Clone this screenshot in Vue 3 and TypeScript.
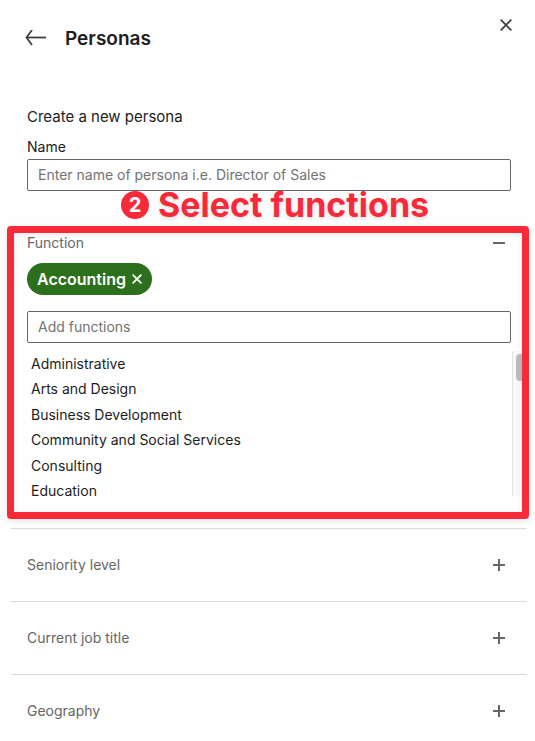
<script setup lang="ts">
import { computed, ref } from 'vue'

const name = ref('')
const query = ref('')
const functionOpen = ref(true)
const selected = ref<string[]>(['Accounting'])
const allFunctions: string[] = [
  'Accounting',
  'Administrative',
  'Arts and Design',
  'Business Development',
  'Community and Social Services',
  'Consulting',
  'Education',
]
const collapsed: string[] = ['Seniority level', 'Current job title', 'Geography']

const options = computed(() =>
  allFunctions.filter(
    (f) => !selected.value.includes(f) && f.toLowerCase().includes(query.value.toLowerCase()),
  ),
)

function add(item: string) {
  selected.value.push(item)
}
function remove(item: string) {
  selected.value = selected.value.filter((f) => f !== item)
}
</script>

<template>
  <main class="panel">
    <header class="header">
      <button class="icon-button back" type="button" aria-label="Back">
        <svg width="22" height="16" viewBox="0 0 22 16" fill="none" stroke="#404040" stroke-width="1.8">
          <path d="M21 7.5H1.5" />
          <path d="M7 0L1.5 7.5L7 15" />
        </svg>
      </button>
      <h1 class="title">Personas</h1>
      <button class="icon-button close" type="button" aria-label="Close">
        <svg width="12" height="12" viewBox="0 0 12 12" fill="none" stroke="#404040" stroke-width="1.8">
          <path d="M0.7 0.7L11.3 11.3M11.3 0.7L0.7 11.3" />
        </svg>
      </button>
    </header>

    <section class="create">
      <h2 class="subtitle">Create a new persona</h2>
      <label class="label" for="persona-name">Name</label>
      <input
        id="persona-name"
        v-model="name"
        class="field"
        type="text"
        placeholder="Enter name of persona i.e. Director of Sales"
      />
    </section>

    <section class="function">
      <div class="callout">
        <svg class="badge" width="28" height="28" viewBox="0 0 28 28" aria-hidden="true">
          <circle cx="14" cy="14" r="14" fill="#f82a3a" />
          <text x="14" y="21" text-anchor="middle" class="badge-text">2</text>
        </svg>
        <span>Select functions</span>
      </div>
      <div class="frame"></div>

      <button
        class="row-head"
        type="button"
        :aria-expanded="functionOpen"
        @click="functionOpen = !functionOpen"
      >
        <span>Function</span>
        <svg width="12" height="12" viewBox="0 0 12 12" stroke="#666" stroke-width="2">
          <path d="M0 6H12" />
          <path v-if="!functionOpen" d="M6 0V12" />
        </svg>
      </button>

      <div v-if="functionOpen" class="function-body">
        <div class="chips">
          <button v-for="item in selected" :key="item" class="chip" type="button" @click="remove(item)">
            <span>{{ item }}</span>
            <svg width="10" height="10" viewBox="0 0 10 10" fill="none" stroke="#fff" stroke-width="1.8">
              <path d="M0.6 0.6L9.4 9.4M9.4 0.6L0.6 9.4" />
            </svg>
          </button>
        </div>
        <input
          v-model="query"
          class="field"
          type="text"
          placeholder="Add functions"
          aria-label="Add functions"
        />
        <div class="list">
          <ul class="options">
            <li v-for="item in options" :key="item">
              <button class="option" type="button" @click="add(item)">{{ item }}</button>
            </li>
          </ul>
          <div class="track"><div class="thumb"></div></div>
        </div>
      </div>
    </section>

    <section v-for="label in collapsed" :key="label" class="collapsed">
      <button class="row-head tall" type="button" aria-expanded="false">
        <span>{{ label }}</span>
        <svg width="12" height="12" viewBox="0 0 12 12" stroke="#666" stroke-width="2">
          <path d="M0 6H12M6 0V12" />
        </svg>
      </button>
    </section>
  </main>
</template>

<style>
body {
  margin: 0;
  background: #fefefe;
}
</style>

<style scoped>
.panel,
.panel * {
  box-sizing: border-box;
}
.panel {
  padding: 0 8px 0 11px;
  font-family: Inter, 'Liberation Sans', sans-serif;
  font-size: 14px;
  line-height: 20px;
  color: #1d1d1d;
}
button {
  margin: 0;
  padding: 0;
  border: 0;
  background: none;
  color: inherit;
  font: inherit;
  text-align: left;
  cursor: pointer;
}
svg {
  display: block;
  flex: none;
}
.header {
  display: flex;
  align-items: center;
  height: 76px;
  padding: 0 15px 0 14px;
}
.title {
  flex: 1;
  margin: 0 0 0 18px;
  padding-top: 2px;
  font-size: 19px;
  line-height: 24px;
  font-weight: 600;
}
.close {
  align-self: flex-start;
  margin-top: 19px;
}
.create {
  padding: 29px 16px 0;
}
.subtitle {
  margin: 0 0 8px;
  font-size: 15px;
  line-height: 24px;
  font-weight: 400;
}
.label {
  display: block;
  margin-bottom: 2px;
}
.field {
  display: block;
  width: 100%;
  height: 32px;
  padding: 0 10px 2px;
  border: 1px solid #666;
  border-radius: 2px;
  background: transparent;
  color: inherit;
  font: inherit;
}
.field::placeholder {
  color: #737373;
  opacity: 1;
}
.function {
  position: relative;
  padding: 40px 16px 32px;
}
.row-head {
  display: flex;
  align-items: center;
  justify-content: space-between;
  width: 100%;
  height: 24px;
  padding-right: 6px;
  color: #666;
}
.function-body {
  padding-top: 8px;
}
.chips {
  display: flex;
  gap: 8px;
  margin-bottom: 16px;
}
.chip {
  display: flex;
  align-items: center;
  gap: 6px;
  height: 32px;
  padding: 0 10px;
  border-radius: 16px;
  background: #2c6f1c;
  color: #fff;
  font-size: 16px;
  font-weight: 600;
}
.list {
  display: flex;
  height: 145px;
  margin: 8px -16px 0 0;
}
.options {
  flex: 1;
  display: grid;
  grid-auto-rows: 1fr;
  height: 153px;
  margin: 0;
  padding: 0 4px;
  list-style: none;
}
.option {
  display: flex;
  align-items: center;
  width: 100%;
  height: 100%;
}
.track {
  width: 15px;
  padding: 3px;
  border-left: 1px solid #e2e2e2;
  background: #f8f8f8;
}
.thumb {
  height: 27px;
  border-radius: 4px;
  background: #bcbcbc;
}
.frame {
  position: absolute;
  inset: 35px -2px 9px -4px;
  border: 7px solid #f82a3a;
  border-radius: 4px;
  box-shadow: 0 2px 6px rgba(0, 0, 0, 0.1), inset 0 2px 6px rgba(0, 0, 0, 0.08);
  pointer-events: none;
}
.callout {
  position: absolute;
  top: -8px;
  left: 110px;
  display: flex;
  align-items: center;
  gap: 9px;
  color: #f82a3a;
  font-size: 34px;
  line-height: 44px;
  font-weight: 700;
  white-space: nowrap;
  text-shadow: 0 2px 4px rgba(0, 0, 0, 0.12);
}
.badge-text {
  fill: #fff;
  font-size: 20px;
  font-weight: 700;
  text-shadow: none;
}
.collapsed {
  padding: 0 16px;
  border-top: 1px solid #d9d9d9;
}
.tall {
  height: 72px;
}
</style>
